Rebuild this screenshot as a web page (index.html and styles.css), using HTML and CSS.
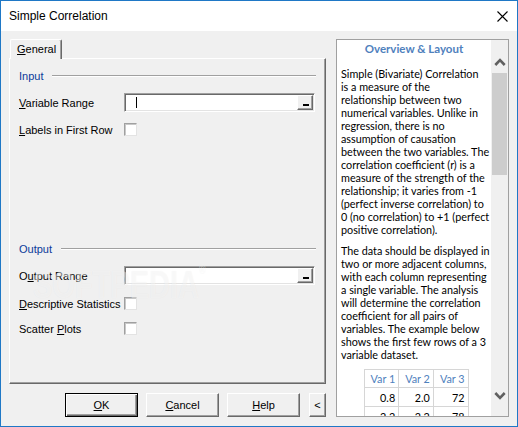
FILE: index.html
```html
<!DOCTYPE html>
<html>
<head>
<meta charset="utf-8">
<link rel="stylesheet" href="styles.css">
</head>
<body>
<div class="window">
  <div class="titlebar">
    <span class="title">Simple Correlation</span>
    <svg class="close" width="11" height="11" viewBox="0 0 11 11"><path d="M0.5 0.5 L10.5 10.5 M10.5 0.5 L0.5 10.5" stroke="#000" stroke-width="1.1" fill="none"/></svg>
  </div>
  <div class="body">
    <div class="left">
      <div class="tabs"><div class="tab"><u>G</u>eneral</div></div>
      <div class="panel">
        <div class="group-head"><span>Input</span><i class="rule"></i></div>
        <div class="row field-row"><label><u>V</u>ariable Range</label><div class="field"><span class="caret"></span><span class="pick"><i></i></span></div></div>
        <div class="row check-row first-check"><label><u>L</u>abels in First Row</label><span class="check"></span></div>
        <div class="group-head output-head"><span>Output</span><i class="rule"></i></div>
        <div class="row field-row"><label>O<u>u</u>tput Range</label><div class="field"><span class="pick"><i></i></span></div></div>
        <div class="row check-row"><label><u>D</u>escriptive Statistics</label><span class="check"></span></div>
        <div class="row check-row"><label>Scatter <u>P</u>lots</label><span class="check"></span></div>
      </div>
      <div class="buttons">
        <div class="btn default"><span><u>O</u>K</span></div>
        <div class="btn"><span><u>C</u>ancel</span></div>
        <div class="btn"><span><u>H</u>elp</span></div>
        <div class="btn small"><span>&lt;</span></div>
      </div>
    </div>
    <div class="help">
      <div class="help-text">
        <div class="help-title">Overview &amp; Layout</div>
        <p>Simple (Bivariate) Correlation<br>is a measure of the<br>relationship between two<br>numerical variables. Unlike in<br>regression, there is no<br>assumption of causation<br>between the two variables. The<br>correlation coefficient (r) is a<br>measure of the strength of the<br>relationship; it varies from -1<br>(perfect inverse correlation) to<br>0 (no correlation) to +1 (perfect<br>positive correlation).</p>
        <p>The data should be displayed in<br>two or more adjacent columns,<br>with each column representing<br>a single variable. The analysis<br>will determine the correlation<br>coefficient for all pairs of<br>variables. The example below<br>shows the first few rows of a 3<br>variable dataset.</p>
        <table class="data">
          <tr class="hd"><td>Var 1</td><td>Var 2</td><td>Var 3</td></tr>
          <tr><td>0.8</td><td>2.0</td><td>72</td></tr>
          <tr><td>2.2</td><td>2.2</td><td>78</td></tr>
        </table>
      </div>
      <div class="scrollbar">
        <div class="sb-btn up"><svg width="12" height="8" viewBox="0 0 12 8"><polyline points="1.3,7 6,2.2 10.7,7" fill="none" stroke="#606060" stroke-width="2.6"/></svg></div>
        <div class="sb-thumb"></div>
        <div class="sb-track"></div>
        <div class="sb-btn down"><svg width="12" height="8" viewBox="0 0 12 8"><polyline points="1.3,1 6,5.8 10.7,1" fill="none" stroke="#606060" stroke-width="2.6"/></svg></div>
      </div>
    </div>
  </div>
  <div class="watermark">SOFTPEDIA<sup>®</sup></div>
</div>
</body>
</html>
```

FILE: styles.css
```css
* { box-sizing: border-box; }
html, body { margin: 0; padding: 0; }
body { width: 518px; height: 427px; overflow: hidden; background: #f0f0f0; }

.window {
  position: relative;
  width: 518px;
  height: 427px;
  border: 1px solid #1f78c6;
  background: #f0f0f0;
  font-family: "Liberation Sans", Arial, sans-serif;
  font-size: 11px;
  color: #000;
  display: flex;
  flex-direction: column;
}

.titlebar {
  height: 30px;
  background: #fff;
  display: flex;
  align-items: center;
  justify-content: space-between;
  padding: 0 9px 0 8px;
}
.title { font-size: 12px; }
.close { display: block; }

.body {
  flex: 1;
  display: flex;
  padding: 8px;
  gap: 10px;
}

.left { width: 317px; display: flex; flex-direction: column; }

.tabs { display: flex; height: 19px; position: relative; z-index: 2; }
.tab {
  margin-left: 1px;
  width: 52px;
  height: 20px;
  background: #f0f0f0;
  border: 1px solid;
  border-color: #fff #696969 transparent #fff;
  border-bottom: none;
  box-shadow: inset -1px 0 #a0a0a0;
  border-radius: 2px 2px 0 0;
  padding: 2px 0 0 6px;
  line-height: 14px;
}

.panel {
  height: 326px;
  border: 1px solid;
  border-color: #fff #696969 #696969 #fff;
  box-shadow: inset -1px -1px #a0a0a0;
  padding: 10px 9px 0 9px;
  display: flex;
  flex-direction: column;
}

.group-head {
  display: flex;
  align-items: center;
  height: 14px;
  color: #0b3a9a;
}
.group-head .rule {
  flex: 1;
  margin-left: 9px;
  border-top: 1px solid #a0a0a0;
  border-bottom: 1px solid #fff;
  height: 2px;
}
.output-head { margin-top: 106px; }

.row { display: flex; align-items: center; }
.row label { width: 105px; flex: none; white-space: nowrap; }
.field-row { margin-top: 10px; height: 19px; }
.check-row { margin-top: 12px; height: 13px; }
.first-check { margin-top: 11px; }

.field {
  width: 191px;
  height: 19px;
  background: #fff;
  border: 1px solid;
  border-color: #a0a0a0 #fff #fff #a0a0a0;
  box-shadow: inset 1px 1px #696969, inset -1px -1px #e3e3e3;
  display: flex;
  align-items: center;
  padding: 1px 1px 1px 11px;
}
.caret { width: 1px; height: 11px; background: #000; }
.pick {
  margin-left: auto;
  width: 16px;
  height: 15px;
  background: #f0f0f0;
  border: 1px solid;
  border-color: #fff #696969 #696969 #fff;
  box-shadow: inset -1px -1px #a0a0a0;
  display: flex;
  align-items: flex-end;
  justify-content: center;
  padding-bottom: 3px;
}
.pick i { display: block; width: 6px; height: 2px; background: #000; margin-left: 1px; }

.check {
  width: 13px;
  height: 13px;
  background: #fff;
  border: 1px solid;
  border-color: #a0a0a0 #e3e3e3 #e3e3e3 #a0a0a0;
  box-shadow: inset 1px 1px #c8c8c8;
}

.buttons {
  margin-top: 9px;
  height: 24px;
  display: flex;
  justify-content: flex-end;
  gap: 8px;
}
.btn {
  width: 73px;
  height: 24px;
  background: #f0f0f0;
  border: 1px solid;
  border-color: #fff #696969 #696969 #fff;
  box-shadow: inset -1px -1px #a0a0a0;
  display: flex;
  align-items: center;
  justify-content: center;
}
.btn.default {
  border-color: #000;
  box-shadow: inset 1px 1px #fff, inset -1px -1px #696969, inset -2px -2px #a0a0a0;
}
.btn.small { width: 17px; margin-left: 1px; }

.help {
  width: 173px;
  height: 378px;
  background: #fff;
  border: 1px solid #a0a0a0;
  display: flex;
  overflow: hidden;
}
.help-text {
  flex: 1;
  overflow: hidden;
  padding: 2px 0 0 4px;
  font-family: Lato, "Open Sans", sans-serif;
  font-size: 10.8px;
  line-height: 13px;
  white-space: nowrap;
  color: #000;
}
.help-title {
  text-align: center;
  color: #4f81bd;
  font-weight: bold;
  line-height: 14px;
  margin: 0 0 11px -4px;
  font-size: 11.5px;
}
.help-text p { margin: 0 0 8px 0; }

.data {
  border-collapse: collapse;
  margin: 0 auto;
  width: 105px;
}
.data td {
  border: 1px solid #d6d6d6;
  text-align: right;
  padding: 0 3px 0 0;
  height: 19px;
  width: 35px;
}
.data tr.hd td { color: #4f81bd; height: 18px; }

.scrollbar {
  width: 17px;
  flex: none;
  background: #f0f0f0;
  display: flex;
  flex-direction: column;
  align-items: center;
}
.sb-btn { width: 17px; height: 33px; display: flex; justify-content: center; }
.sb-btn svg { display: block; }
.sb-btn.up { align-items: flex-end; padding-bottom: 7px; }
.sb-btn.down { align-items: flex-start; padding-top: 9px; }
.sb-thumb { width: 15px; height: 102px; background: #cdcdcd; }
.sb-track { flex: 1; }

.watermark {
  position: absolute;
  left: 32px;
  top: 262px;
  font-family: "Liberation Sans", Arial, sans-serif;
  font-weight: bold;
  font-size: 29px;
  transform: scaleY(1.35);
  transform-origin: top left;
  color: rgba(255,255,255,0.45);
  text-shadow: 0 0 1px rgba(0,0,0,0.05);
  pointer-events: none;
}
.watermark sup { font-size: 9px; font-weight: normal; vertical-align: top; }
```
